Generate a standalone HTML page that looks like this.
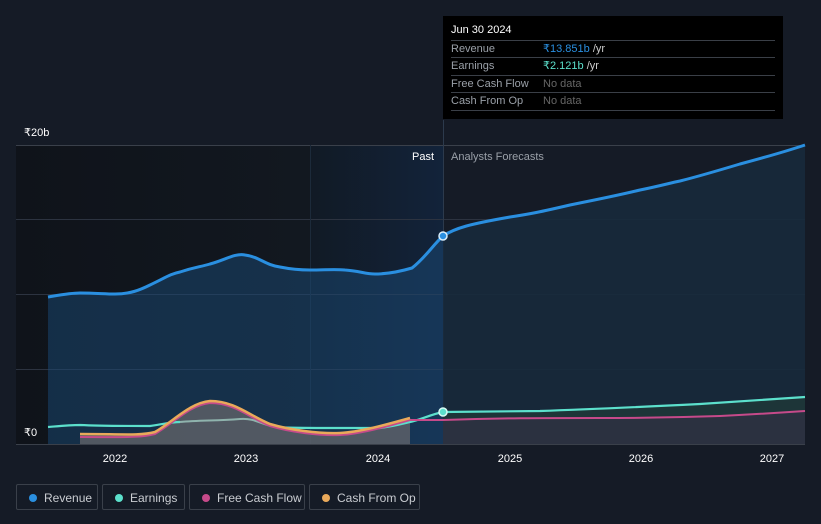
<!DOCTYPE html>
<html><head><meta charset="utf-8"><style>
body{margin:0;background:#151b26;font-family:"Liberation Sans",sans-serif;}
.wrap{position:relative;width:821px;height:524px;overflow:hidden;background:#151b26}
.tip{position:absolute;left:443px;top:16px;width:340px;height:103px;background:#000;color:#fff;font-size:11px}
.tip .r{position:absolute;left:8px;width:324px;border-top:1px solid #3a3f47;height:17px;line-height:17px;color:#9aa0a8}
.tip .r span{position:absolute;left:92px}
.leg{position:absolute;top:484px;height:26px;border:1px solid #3a404a;border-radius:2px;color:#c9ccd1;font-size:12px;line-height:26px;box-sizing:border-box;padding-left:27px}
.leg i{position:absolute;left:12px;top:9px;width:8px;height:8px;border-radius:50%}
</style></head><body><div class="wrap">
<svg width="821" height="524" style="position:absolute;left:0;top:0">
<defs>
<linearGradient id="pg" x1="0" x2="1" y1="0" y2="0"><stop offset="0" stop-color="#0f131a"/><stop offset="1" stop-color="#121820"/></linearGradient>
<linearGradient id="hg" x1="0" x2="1" y1="0" y2="0"><stop offset="0" stop-color="#111a25"/><stop offset="1" stop-color="#12233a"/></linearGradient>
</defs>
<rect x="16" y="145" width="294" height="299" fill="url(#pg)"/>
<rect x="310" y="145" width="133" height="299" fill="url(#hg)"/>
<g stroke="#2c3340" stroke-width="1">
<line x1="16" y1="145.5" x2="805" y2="145.5" stroke="#3a404a"/><line x1="16" y1="219.5" x2="805" y2="219.5"/><line x1="16" y1="294.5" x2="805" y2="294.5"/><line x1="16" y1="369.5" x2="805" y2="369.5"/><line x1="16" y1="444.5" x2="805" y2="444.5" stroke="#3a404a"/>
<line x1="443.5" y1="120" x2="443.5" y2="444" stroke="#2c3a4c"/>
<line x1="310.5" y1="145" x2="310.5" y2="444" stroke="#1c2a3a"/>
</g>
<path d="M48,297 C60,295 70,293 80,293 C95,293 105,294 115,294 C130,294 140,290 150,285 C165,278 170,274 180,272 C195,267 200,267 210,264 C225,260 235,253 245,255 C260,257 265,265 280,267 C290,269 300,270 310,270 C325,270 335,269 345,270 C360,271 365,274 375,274 C385,274 395,273 412,268 C425,258 433,245 443,236 L443,444 L48,444Z" fill="#1a4a75" opacity="0.5"/>
<path d="M443,236 C455,228 470,224 510,217 C530,214 540,212 570,205 C600,199 620,195 640,190 C660,186 670,183 680,181 C700,176 720,170 740,164 C770,156 790,150 805,145 L805,444 L443,444Z" fill="#172a3c" opacity="0.9"/>
<path d="M443,412 L540,411 C600,409 640,407 700,404 C760,400 790,398 805,397 L805,444 L443,444Z" fill="#1d3538"/>
<path d="M443,420 C500,418 540,418 600,418 C650,418 690,417 720,416 C760,414 790,412 805,411 L805,444 L443,444Z" fill="#2b3140"/>
<path d="M48,297 C60,295 70,293 80,293 C95,293 105,294 115,294 C130,294 140,290 150,285 C165,278 170,274 180,272 C195,267 200,267 210,264 C225,260 235,253 245,255 C260,257 265,265 280,267 C290,269 300,270 310,270 C325,270 335,269 345,270 C360,271 365,274 375,274 C385,274 395,273 412,268 C425,258 433,245 443,236 C455,228 470,224 510,217 C530,214 540,212 570,205 C600,199 620,195 640,190 C660,186 670,183 680,181 C700,176 720,170 740,164 C770,156 790,150 805,145" fill="none" stroke="#2a8fe0" stroke-width="3"/>
<path d="M80,434 C120,434 140,436 155,432 C175,420 190,403 210,401 C235,401 250,416 270,424 C290,430 320,434 340,433 C360,432 385,425 410,418 L410,444 L80,444Z" fill="#6b6a6c" opacity="0.7"/>
<path d="M180,422 C200,420 215,421 240,419 C255,418 260,424 275,427" fill="none" stroke="#8fb3ad" stroke-width="2"/>
<path d="M48,427 C60,426 70,425 80,425 C100,426 130,426 150,426 C165,424 170,422 180,422 M275,427 C290,428 300,428 380,428 C395,426 405,423 410,422 C420,420 432,414 443,412 L540,411 C600,409 640,407 700,404 C760,400 790,398 805,397" fill="none" stroke="#5ce0cc" stroke-width="2.2"/>
<path d="M80,437 C120,437 140,438 155,434 C175,422 190,405 210,403 C235,403 250,418 270,426 C290,432 320,436 340,435 C360,434 385,427 410,420 L443,420 C500,418 540,418 600,418 C650,418 690,417 720,416 C760,414 790,412 805,411" fill="none" stroke="#c64a8a" stroke-width="2"/>
<path d="M80,434 C120,434 140,436 155,432 C175,420 190,403 210,401 C235,401 250,416 270,424 C290,430 320,434 340,433 C360,432 385,425 410,418" fill="none" stroke="#e9a95a" stroke-width="2.5"/>
<circle cx="443" cy="236" r="4" fill="#2a8fe0" stroke="#d8eefc" stroke-width="1.5"/>
<circle cx="443" cy="412" r="4" fill="#5ce0cc" stroke="#d8fbf5" stroke-width="1.5"/>
<g fill="#fff" font-size="11" font-family="Liberation Sans,sans-serif">
<text x="24" y="136">₹20b</text><text x="24" y="436">₹0</text>
<text x="412" y="160">Past</text>
<text x="451" y="160" fill="#9aa0a8">Analysts Forecasts</text>
<g text-anchor="middle"><text x="115" y="462">2022</text><text x="246" y="462">2023</text><text x="378" y="462">2024</text><text x="510" y="462">2025</text><text x="641" y="462">2026</text><text x="772" y="462">2027</text></g>
</g>
</svg>
<div class="tip">
<div style="position:absolute;left:8px;top:8px;font-size:11px;">Jun 30 2024</div>
<div class="r" style="top:24px">Revenue<span style="color:#2a8fe0">₹13.851b <b style="font-weight:normal;color:#ccc">/yr</b></span></div>
<div class="r" style="top:41px">Earnings<span style="color:#5ce0cc">₹2.121b <b style="font-weight:normal;color:#ccc">/yr</b></span></div>
<div class="r" style="top:59px">Free Cash Flow<span style="color:#666">No data</span></div>
<div class="r" style="top:76px;border-bottom:1px solid #3a3f47">Cash From Op<span style="color:#666">No data</span></div>
</div>
<div class="leg" style="left:16px;width:82px"><i style="background:#2a8fe0"></i>Revenue</div>
<div class="leg" style="left:102px;width:83px"><i style="background:#5ce0cc"></i>Earnings</div>
<div class="leg" style="left:189px;width:116px"><i style="background:#c64a8a"></i>Free Cash Flow</div>
<div class="leg" style="left:309px;width:111px"><i style="background:#e9a95a"></i>Cash From Op</div>
</div></body></html>
